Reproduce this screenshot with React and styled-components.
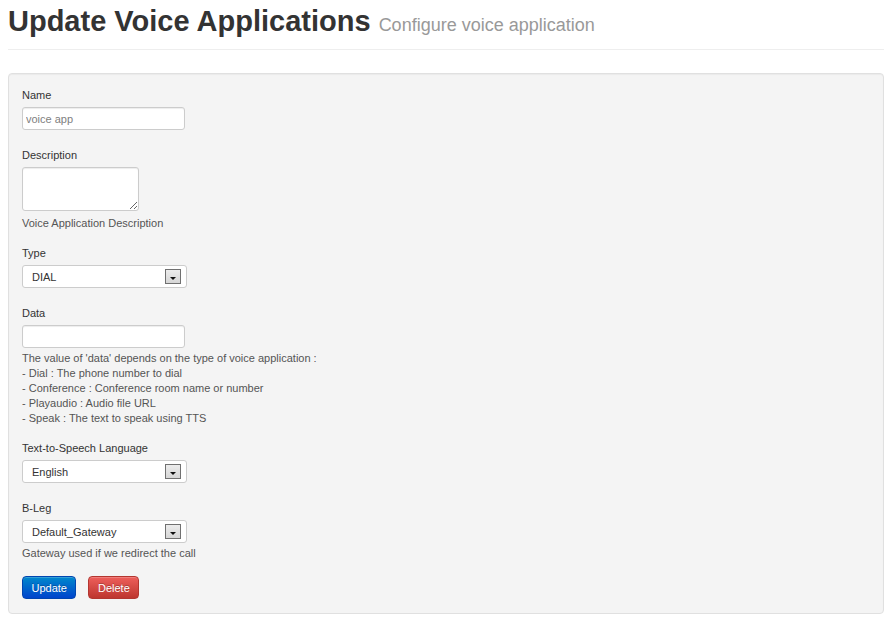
import React from "react";
import styled, { createGlobalStyle } from "styled-components";

const Global = createGlobalStyle`
  html, body { margin: 0; padding: 0; background: #fff; }
  body { font-family: "Liberation Sans", Arial, sans-serif; color: #333; }
`;

const Page = styled.div`
  width: 876px;
  margin-left: 8px;
  padding-top: 1px;
`;

const Header = styled.div`
  border-bottom: 1px solid #eee;
  padding-bottom: 8px;
  margin-bottom: 23px;
`;

const Title = styled.h1`
  margin: 0;
  font-size: 29px;
  letter-spacing: 0;
  line-height: 40px;
  font-weight: bold;
  color: #333;
  white-space: nowrap;
`;

const Sub = styled.small`
  font-size: 18px;
  line-height: 1;
  font-weight: normal;
  color: #999;
`;

const Well = styled.form`
  background: #f4f4f4;
  border: 1px solid #e0e0e0;
  border-radius: 4px;
  box-shadow: inset 0 1px 1px rgba(0, 0, 0, 0.04);
  padding: 13px 13px 14px;
  font-size: 11px;
`;

const Group = styled.div`
  display: flex;
  flex-direction: column;
  align-items: flex-start;
  margin-bottom: 14px;
`;

const Label = styled.label`
  display: block;
  line-height: 16px;
  margin-bottom: 4px;
  color: #333;
`;

const TextInput = styled.input`
  display: block;
  box-sizing: border-box;
  width: 163px;
  height: 23px;
  margin: 0 0 3px;
  padding: 0 3px;
  border: 1px solid #ccc;
  border-radius: 3px;
  background: #fff;
  box-shadow: inset 0 1px 1px rgba(0, 0, 0, 0.075);
  font-family: "Liberation Sans", Arial, sans-serif;
  font-size: 11px;
  color: #808080;
  outline: none;
`;

const TextArea = styled.textarea`
  display: block;
  box-sizing: border-box;
  width: 117px;
  height: 44px;
  margin: 0 0 5px;
  padding: 3px;
  border: 1px solid #ccc;
  border-radius: 3px;
  background: #fff;
  box-shadow: inset 0 1px 1px rgba(0, 0, 0, 0.075);
  font-family: "Liberation Sans", Arial, sans-serif;
  font-size: 11px;
  outline: none;
`;

const Select = styled.div`
  box-sizing: border-box;
  width: 165px;
  height: 23px;
  margin-bottom: 3px;
  display: flex;
  align-items: center;
  justify-content: space-between;
  padding: 0 5px 0 9px;
  border: 1px solid #ccc;
  border-radius: 3px;
  background: #fff;
  color: #333;
  font-size: 11px;
`;

const ArrowBox = styled.span`
  box-sizing: border-box;
  width: 16px;
  height: 15px;
  border: 1px solid #707070;
  background: linear-gradient(#ececec, #d6d6d6);
  display: flex;
  align-items: flex-end;
  justify-content: center;
  padding-bottom: 3px;
`;

const Tri = styled.span`
  width: 0;
  height: 0;
  border-left: 3px solid transparent;
  border-right: 3px solid transparent;
  border-top: 3px solid #111;
`;

const Help = styled.div`
  line-height: 15px;
  color: #555;
`;

const Actions = styled.div`
  display: flex;
  gap: 12px;
  padding-top: 1px;
`;

const Button = styled.button`
  box-sizing: border-box;
  height: 23px;
  padding: 0 8.5px;
  border-radius: 4px;
  font-family: "Liberation Sans", Arial, sans-serif;
  font-size: 11px;
  color: #fff;
  text-shadow: 0 -1px 0 rgba(0, 0, 0, 0.25);
  border: 1px solid ${(p) => (p.$danger ? "#b33630" : "#0045b0")};
  background: ${(p) =>
    p.$danger
      ? "linear-gradient(#ee5f5b, #bd362f)"
      : "linear-gradient(#0088cc, #0044cc)"};
  box-shadow: inset 0 1px 0 rgba(255, 255, 255, 0.2);
  cursor: pointer;
`;

const Dropdown = ({ value }) => (
  <Select>
    <span>{value}</span>
    <ArrowBox>
      <Tri />
    </ArrowBox>
  </Select>
);

export default function App() {
  return (
    <>
      <Global />
      <Page>
        <Header>
          <Title>
            Update Voice Applications <Sub>Configure voice application</Sub>
          </Title>
        </Header>
        <Well onSubmit={(e) => e.preventDefault()}>
          <Group>
            <Label>Name</Label>
            <TextInput defaultValue="voice app" />
          </Group>
          <Group>
            <Label>Description</Label>
            <TextArea />
            <Help>Voice Application Description</Help>
          </Group>
          <Group>
            <Label>Type</Label>
            <Dropdown value="DIAL" />
          </Group>
          <Group>
            <Label>Data</Label>
            <TextInput />
            <Help>
              The value of 'data' depends on the type of voice application :
              <br />- Dial : The phone number to dial
              <br />- Conference : Conference room name or number
              <br />- Playaudio : Audio file URL
              <br />- Speak : The text to speak using TTS
            </Help>
          </Group>
          <Group>
            <Label>Text-to-Speech Language</Label>
            <Dropdown value="English" />
          </Group>
          <Group>
            <Label>B-Leg</Label>
            <Dropdown value="Default_Gateway" />
            <Help>Gateway used if we redirect the call</Help>
          </Group>
          <Actions>
            <Button type="button">Update</Button>
            <Button type="button" $danger>
              Delete
            </Button>
          </Actions>
        </Well>
      </Page>
    </>
  );
}
